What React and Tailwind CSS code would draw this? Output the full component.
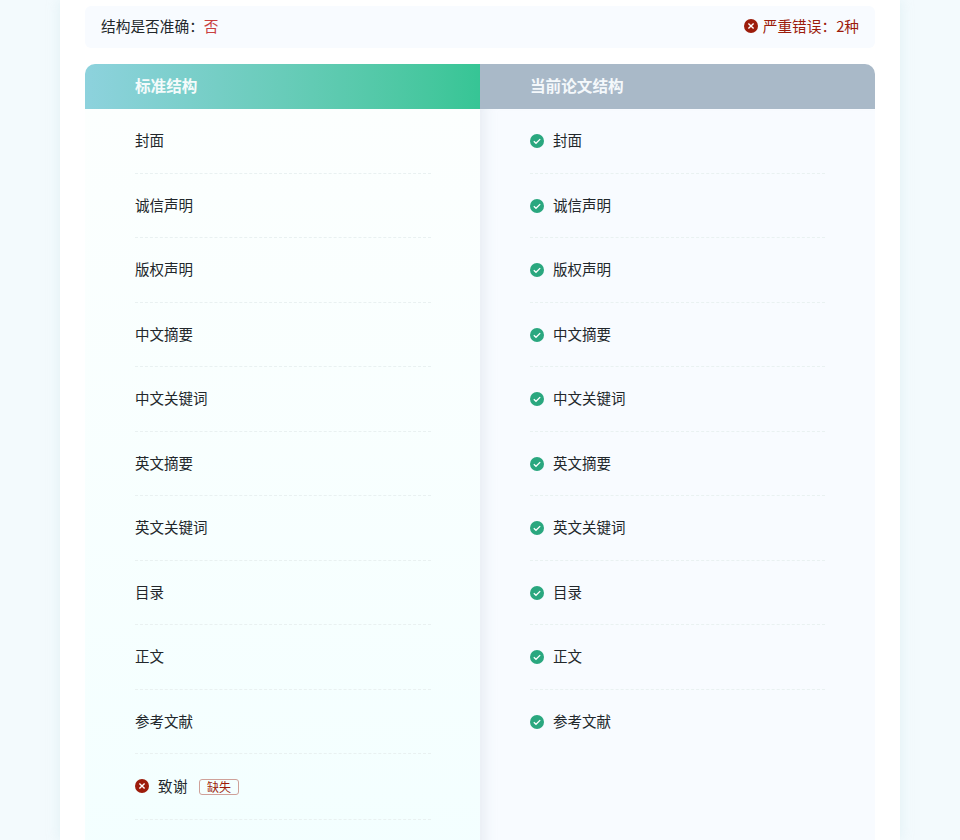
const standard = ["封面","诚信声明","版权声明","中文摘要","中文关键词","英文摘要","英文关键词","目录","正文","参考文献"];

function CheckIcon() {
  return (
    <svg width="14" height="14" viewBox="0 0 14 14" className="shrink-0">
      <circle cx="7" cy="7" r="7" fill="#2aa77f" />
      <path d="M3.8 7.2 6 9.3 10.2 5.1" fill="none" stroke="#fff" strokeWidth="1.3" />
    </svg>
  );
}

function CrossIcon() {
  return (
    <svg width="14" height="14" viewBox="0 0 14 14" className="shrink-0">
      <circle cx="7" cy="7" r="7" fill="#9c1c0b" />
      <path d="M4.4 4.4 9.6 9.6M9.6 4.4 4.4 9.6" fill="none" stroke="#fff" strokeWidth="1.4" />
    </svg>
  );
}

function Row({ children, className = "h-[64.5px] border-b border-dashed pt-[0.5px]" }) {
  return (
    <div className={`${className} flex items-center gap-[9px] border-[#e9f1f1] text-[14.5px] leading-[22px] text-[#22272b]`}>
      {children}
    </div>
  );
}

export default function App() {
  return (
    <div className="h-[840px] overflow-hidden bg-[#f3fafd] font-['Noto_Sans_CJK_SC','Liberation_Sans',sans-serif]">
      <div className="mx-auto h-full w-[840px] bg-white px-[25px] pt-[6px] shadow-[0_0_12px_rgba(190,225,230,0.35)]">
        <div className="flex h-[42px] items-center justify-between rounded-md bg-[#f8fbff] px-4 pb-[3px] text-[14.7px] leading-[22px]">
          <div className="text-[#22272b]">
            结构是否准确：<span className="text-[#c9403f]">否</span>
          </div>
          <div className="flex items-center gap-[5px] text-[#9c1c0b]">
            <CrossIcon />
            <span>严重错误：2种</span>
          </div>
        </div>

        <div className="mt-4 grid h-[900px] grid-cols-2">
          <div className="flex flex-col">
            <div className="flex h-[45px] items-center rounded-tl-[10px] bg-gradient-to-r from-[#8dd2dd] to-[#36c595] pb-[1px] pl-[50px] text-[15.6px] font-bold text-[#f4fbfb]">
              标准结构
            </div>
            <div className="flex-1 bg-gradient-to-b from-[#fcfffe] to-[#f2ffff] pl-[50px] pr-[49px]">
              {standard.map((s) => (
                <Row key={s}>
                  <span className="mb-[2px]">{s}</span>
                </Row>
              ))}
              <Row className="h-[66px] border-b border-dashed">
                <span className="mb-[1px] flex">
                  <CrossIcon />
                </span>
                <span className="mb-[2px] tracking-[0.5px]">致谢</span>
                <span className="ml-[2px] flex h-[16px] w-[40px] items-center justify-center rounded-[3px] border border-[#cfa199] text-[12px] text-[#9c1c0b]">
                  缺失
                </span>
              </Row>
            </div>
          </div>

          <div className="flex flex-col">
            <div className="flex h-[45px] items-center rounded-tr-[10px] bg-[#a9b9c8] pb-[1px] pl-[50px] text-[15.6px] font-bold text-[#f4f8fb]">
              当前论文结构
            </div>
            <div className="flex-1 bg-[#f8fbff] pl-[50px] pr-[50px] shadow-[inset_16px_0_14px_-12px_rgba(170,180,195,0.22)]">
              {standard.map((s, i) => (
                <Row key={s} className={i === standard.length - 1 ? "h-[64.5px] pt-[0.5px]" : "h-[64.5px] border-b border-dashed pt-[0.5px]"}>
                  <CheckIcon />
                  <span className="mb-[2px]">{s}</span>
                </Row>
              ))}
            </div>
          </div>
        </div>
      </div>
    </div>
  );
}
